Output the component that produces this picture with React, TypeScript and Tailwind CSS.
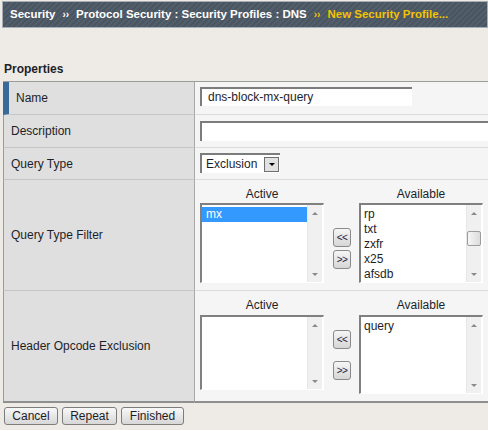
import React from "react";

const font = "font-['Liberation_Sans',Arial,sans-serif]";

function Arrow({ up }: { up?: boolean }) {
  return (
    <div className="h-[16px] w-full flex items-center justify-center">
      {up ? (
        <div className="w-0 h-0 border-x-[3px] border-x-transparent border-b-[3px] border-b-[#8a8a8a]" />
      ) : (
        <div className="w-0 h-0 border-x-[3px] border-x-transparent border-t-[3px] border-t-[#8a8a8a]" />
      )}
    </div>
  );
}

function ListBox({
  items,
  selected,
  height,
  thumb,
}: {
  items: string[];
  selected?: string;
  height: string;
  thumb?: boolean;
}) {
  return (
    <div className={`w-[124px] ${height} flex bg-white border-t-2 border-l-2 border-[#808080] border-r border-b border-r-white border-b-white`}>
      <div className="flex-1 pt-[2px] overflow-hidden">
        {items.map((it) => (
          <div
            key={it}
            className={
              it === selected
                ? "h-[15px] leading-[15px] pl-[4px] bg-[#3399ff] text-white"
                : "h-[15px] leading-[15px] pl-[3px]"
            }
          >
            {it}
          </div>
        ))}
      </div>
      <div className="w-[15px] mr-[1px] bg-[#f0f0f0] border-l border-[#e6e6e6] flex flex-col items-center">
        <Arrow up />
        {thumb && (
          <div className="mt-[10px] h-[15px] w-[14px] rounded-[2px] border border-[#9c9c9c] bg-gradient-to-r from-[#f6f6f6] to-[#dcdcdc]" />
        )}
        <div className="flex-1" />
        <Arrow />
      </div>
    </div>
  );
}

function MoveButton({ label }: { label: string }) {
  return (
    <div className="w-[18px] h-[19px] rounded-[3px] border border-[#8a8a8a] bg-gradient-to-b from-[#f6f6f6] to-[#d6d6d6] flex items-center justify-center text-[10px] leading-none tracking-[-0.5px] text-[#1a1a40]">
      {label}
    </div>
  );
}

function DualList({
  active,
  available,
  selected,
  leftH,
  rightH,
  headH,
  headPad,
  btnTop,
  btnGap,
  thumb,
}: {
  active: string[];
  available: string[];
  selected?: string;
  leftH: string;
  rightH: string;
  headH: string;
  headPad: string;
  btnTop: string;
  btnGap: string;
  thumb?: boolean;
}) {
  return (
    <div className={`pl-[5px] ${headPad}`}>
      <div className={`flex ${headH}`}>
        <div className="w-[124px] text-center leading-[15px]">Active</div>
        <div className="w-[35px]" />
        <div className="w-[124px] text-center leading-[15px]">Available</div>
      </div>
      <div className="flex items-start">
        <ListBox items={active} selected={selected} height={leftH} />
        <div className={`ml-[9px] mr-[8px] flex flex-col ${btnTop} ${btnGap}`}>
          <MoveButton label="<<" />
          <MoveButton label=">>" />
        </div>
        <ListBox items={available} height={rightH} thumb={thumb} />
      </div>
    </div>
  );
}

function Row({
  label,
  height,
  first,
  last,
  children,
}: {
  label: string;
  height: string;
  first?: boolean;
  last?: boolean;
  children?: React.ReactNode;
}) {
  const bottom = last ? "border-b-2 border-b-[#8f8f8f]" : "border-b";
  return (
    <div className={`flex ${height}`}>
      <div
        className={`w-[192px] shrink-0 flex items-center bg-[#dfdfdf] border-r border-r-[#a8a8a8] ${bottom} ${
          last ? "" : "border-b-[#c6c6c6]"
        } ${first ? "border-l-[6px] border-l-[#3a6a9a] pl-[7px]" : "border-l border-l-[#9a9a9a] pl-[7px]"}`}
      >
        {label}
      </div>
      <div className={`flex-1 bg-[#f5f5f5] ${bottom} ${last ? "" : "border-b-[#dcdcdc]"}`}>{children}</div>
    </div>
  );
}

function Button({ label, w }: { label: string; w: string }) {
  return (
    <div className={`${w} h-[18px] rounded-[3px] border border-[#7d7d7d] bg-gradient-to-b from-[#f8f8f8] to-[#d7d7d7] flex items-center justify-center leading-none`}>
      {label}
    </div>
  );
}

export default function App() {
  return (
    <div className={`w-[488px] h-[430px] overflow-hidden bg-[#eeebe6] text-[12px] text-[#1e1e28] ${font}`}>
      {/* Breadcrumb bar */}
      <div className="pt-[1px] pl-[2px]">
        <div className="h-[27px] border border-[#a7aeb6] bg-[repeating-linear-gradient(135deg,#4a5562_0px,#4a5562_2px,#535e6b_2px,#535e6b_4px)] flex items-center pl-[7px] text-[11.5px] font-bold text-white whitespace-nowrap">
          <span>Security</span>
          <span className="mx-[7px] text-[10px]">››</span>
          <span>Protocol Security : Security Profiles : DNS</span>
          <span className="mx-[7px] text-[10px] text-[#f2c300]">››</span>
          <span className="text-[#f2c300]">New Security Profile...</span>
        </div>
      </div>

      <div className="mt-[34px] pl-[4px] h-[19px] font-bold leading-[15px]">Properties</div>

      {/* Properties table */}
      <div className="ml-[3px] border-t border-[#9c9c9c]">
        <Row label="Name" height="h-[33px]" first>
          <div className="pl-[5px] pt-[5px]">
            <div className="w-[212px] h-[19px] bg-white border-t-2 border-l-2 border-[#7c7c7c] pl-[6px] leading-[16px]">
              dns-block-mx-query
            </div>
          </div>
        </Row>
        <Row label="Description" height="h-[33px]">
          <div className="pl-[5px] pt-[6px]">
            <div className="w-[300px] h-[20px] bg-white border-t-2 border-l-2 border-[#7c7c7c]" />
          </div>
        </Row>
        <Row label="Query Type" height="h-[32px]">
          <div className="pl-[5px] pt-[5px]">
            <div className="w-[80px] h-[20px] bg-white border-t-2 border-l-2 border-[#7c7c7c] flex items-center">
              <span className="pl-[4px] flex-1 leading-none">Exclusion</span>
              <div className="w-[15px] h-[15px] mr-[1px] border border-[#6e6e6e] bg-[#e2e2e2] flex items-center justify-center">
                <div className="w-0 h-0 border-x-[3px] border-x-transparent border-t-[3px] border-t-black" />
              </div>
            </div>
          </div>
        </Row>
        <Row label="Query Type Filter" height="h-[111px]">
          <DualList
            active={["mx"]}
            selected="mx"
            available={["rp", "txt", "zxfr", "x25", "afsdb"]}
            leftH="h-[80px]"
            rightH="h-[80px]"
            headH="h-[16px]"
            headPad="pt-[7px]"
            btnTop="pt-[25px]"
            btnGap="gap-[3px]"
            thumb
          />
        </Row>
        <Row label="Header Opcode Exclusion" height="h-[112px]" last>
          <DualList
            active={[]}
            available={["query"]}
            leftH="h-[75px]"
            rightH="h-[79px]"
            headH="h-[17px]"
            headPad="pt-[7px]"
            btnTop="pt-[15px]"
            btnGap="gap-[12px]"
          />
        </Row>
      </div>

      {/* Actions */}
      <div className="flex gap-[4px] pl-[4px] mt-[4px]">
        <Button label="Cancel" w="w-[54px]" />
        <Button label="Repeat" w="w-[55px]" />
        <Button label="Finished" w="w-[63px]" />
      </div>
    </div>
  );
}
